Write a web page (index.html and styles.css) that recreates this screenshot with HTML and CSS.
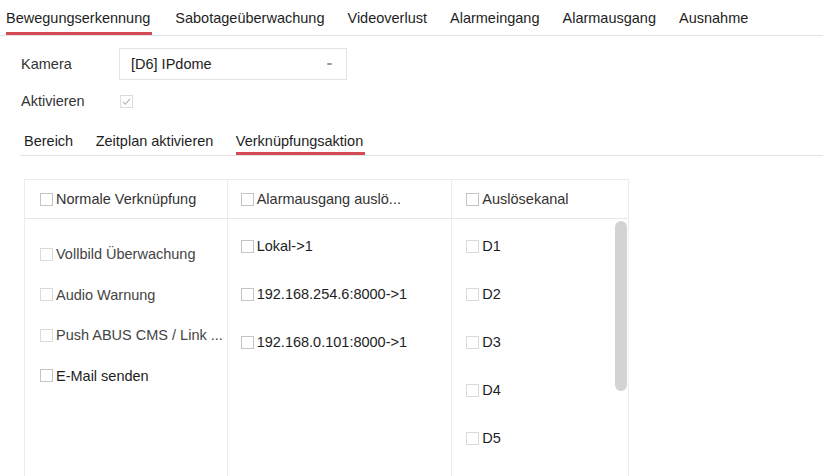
FILE: index.html
```html
<!DOCTYPE html>
<html lang="de">
<head>
<meta charset="utf-8">
<title>Bewegungserkennung</title>
<link rel="stylesheet" href="styles.css">
</head>
<body>
<nav class="tabs">
  <span class="tab active">Bewegungserkennung</span>
  <span class="tab">Sabotageüberwachung</span>
  <span class="tab">Videoverlust</span>
  <span class="tab">Alarmeingang</span>
  <span class="tab">Alarmausgang</span>
  <span class="tab">Ausnahme</span>
</nav>

<section class="form">
  <div class="row row-camera">
    <span class="label">Kamera</span>
    <div class="select">
      <span class="select-text">[D6] IPdome</span>
      <span class="caret"></span>
    </div>
  </div>
  <div class="row row-enable">
    <span class="label">Aktivieren</span>
    <span class="cb cb-checked">
      <svg viewBox="0 0 13 13" width="13" height="13"><path d="M3 6.8 L5.4 9.2 L10 3.8" fill="none" stroke="#b5b5b5" stroke-width="1.1"/></svg>
    </span>
  </div>
</section>

<nav class="subtabs">
  <span class="subtab">Bereich</span>
  <span class="subtab">Zeitplan aktivieren</span>
  <span class="subtab active">Verknüpfungsaktion</span>
</nav>

<div class="table">
  <div class="col col-1">
    <div class="head"><span class="cb"></span>Normale Verknüpfung</div>
    <div class="body body-1">
      <div class="item dim"><span class="cb light"></span>Vollbild Überwachung</div>
      <div class="item dim"><span class="cb light"></span>Audio Warnung</div>
      <div class="item dim"><span class="cb light"></span>Push ABUS CMS / Link ...</div>
      <div class="item"><span class="cb"></span>E-Mail senden</div>
    </div>
  </div>
  <div class="col col-2">
    <div class="head"><span class="cb"></span>Alarmausgang auslö...</div>
    <div class="body body-2">
      <div class="item"><span class="cb"></span>Lokal-&gt;1</div>
      <div class="item"><span class="cb"></span>192.168.254.6:8000-&gt;1</div>
      <div class="item"><span class="cb"></span>192.168.0.101:8000-&gt;1</div>
    </div>
  </div>
  <div class="col col-3">
    <div class="head"><span class="cb"></span>Auslösekanal</div>
    <div class="body body-3">
      <div class="item"><span class="cb light"></span>D1</div>
      <div class="item"><span class="cb light"></span>D2</div>
      <div class="item"><span class="cb light"></span>D3</div>
      <div class="item"><span class="cb light"></span>D4</div>
      <div class="item"><span class="cb light"></span>D5</div>
      <div class="scrollbar"></div>
    </div>
  </div>
</div>
</body>
</html>
```

FILE: styles.css
```css
* { box-sizing: border-box; }

html, body {
  margin: 0;
  padding: 0;
  background: #ffffff;
}

body {
  font-family: "Liberation Sans", Arial, sans-serif;
  font-size: 14.5px;
  color: #1e1e1e;
  width: 826px;
  height: 476px;
  overflow: hidden;
}

/* top tabs */
.tabs {
  display: flex;
  height: 36px;
  margin-right: 3px;
  padding-left: 6px;
  border-bottom: 1px solid #e2e2e2;
}

.tab {
  display: block;
  height: 35px;
  padding-top: 10px;
  line-height: 16px;
  margin-right: 23px;
  border-bottom: 3px solid transparent;
  white-space: nowrap;
}

.tab.active {
  border-bottom-color: #d44a56;
  padding-right: 2px;
}

/* form */
.form {
  padding-left: 21px;
}

.row {
  display: flex;
  align-items: center;
}

.row-camera {
  margin-top: 12px;
  height: 32px;
}

.row-enable {
  margin-top: 8px;
  height: 26px;
}

.label {
  width: 98px;
  color: #333333;
}

.select {
  width: 228px;
  height: 32px;
  border: 1px solid #e4e4e4;
  display: flex;
  align-items: center;
  justify-content: space-between;
  padding-left: 11px;
  padding-right: 14px;
  color: #222222;
}

.caret {
  width: 5px;
  height: 2px;
  background: #9a9a9a;
  border-radius: 1px;
}

.cb {
  display: inline-block;
  flex: none;
  width: 13px;
  height: 13px;
  border: 1px solid #c4c4c4;
  background: #ffffff;
  margin-right: 3px;
}

.cb.light {
  border-color: #dadada;
}

.cb-checked {
  border-color: #dcdcdc;
  margin-left: 1px;
}

.cb-checked svg {
  display: block;
  margin: -1px;
}

/* sub tabs */
.subtabs {
  display: flex;
  margin-left: 20px;
  margin-right: 3px;
  padding-left: 4px;
  padding-top: 19px;
  border-bottom: 1px solid #e2e2e2;
  height: 42px;
}

.subtab {
  display: block;
  line-height: 16px;
  height: 22px;
  padding-bottom: 3px;
  margin-right: 22.5px;
  border-bottom: 3px solid transparent;
  white-space: nowrap;
  color: #1e1e1e;
}

.subtab.active {
  border-bottom-color: #d44a56;
  padding-right: 2px;
}

/* table */
.table {
  display: flex;
  margin-left: 24px;
  margin-top: 23px;
  width: 605px;
  border-top: 1px solid #ececec;
  border-left: 1px solid #ececec;
}

.col {
  border-right: 1px solid #ececec;
}

.col-1 { width: 203px; }
.col-2 { width: 225px; }
.col-3 { width: 177px; }

.head {
  height: 39px;
  border-bottom: 1px solid #e6e6e6;
  display: flex;
  align-items: center;
  white-space: nowrap;
  color: #333333;
}

.col-1 .head { padding-left: 15px; }
.col-2 .head { padding-left: 13px; }
.col-3 .head { padding-left: 14px; }

.body {
  height: 257px;
  position: relative;
}

.body-1 { padding-top: 15px; padding-left: 15px; }
.body-2 { padding-top: 3px; padding-left: 13px; }
.body-3 { padding-top: 3px; padding-left: 14px; }

.item {
  display: flex;
  align-items: center;
  white-space: nowrap;
}

.body-1 .item { height: 40.5px; }
.body-2 .item,
.body-3 .item { height: 48px; }

.item.dim {
  color: #444444;
}

.scrollbar {
  position: absolute;
  right: 1px;
  top: 2px;
  width: 12px;
  height: 170px;
  border-radius: 6px;
  background: #d3d3d3;
}
```
